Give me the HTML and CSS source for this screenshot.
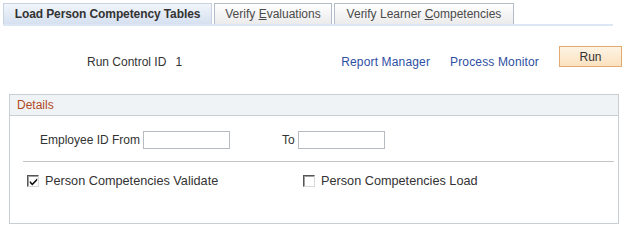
FILE: index.html
```html
<!DOCTYPE html>
<html lang="en">
<head>
    <meta charset="UTF-8">
    <title>Load Person Competency Tables</title>
    <link rel="stylesheet" href="styles.css">
</head>
<body>
    <!-- Page tabs -->
    <div class="tabs">
        <div class="tab active tab-load">Load Person Competency Tables</div>
        <div class="tab tab-eval">Verify <u>E</u>valuations</div>
        <div class="tab tab-learner">Verify Learner <u>C</u>ompetencies</div>
    </div>

    <!-- Run control row -->
    <div class="run-row">
        <span class="run-label">Run Control ID</span>
        <span class="run-value">1</span>
        <div class="run-links">
            <a href="#">Report Manager</a>
            <a href="#">Process Monitor</a>
            <button type="button" class="run-button">Run</button>
        </div>
    </div>

    <!-- Details group box -->
    <div class="group">
        <div class="group-header">Details</div>
        <div class="group-body">
            <div class="field-row">
                <label class="field-label" for="emp-from">Employee ID From</label>
                <input type="text" id="emp-from" class="field-input">
                <label class="field-label to-label" for="emp-to">To</label>
                <input type="text" id="emp-to" class="field-input">
            </div>
            <div class="separator"></div>
            <div class="check-row">
                <div class="check-item first">
                    <span class="check-box checked">
                        <svg width="9" height="9" viewBox="0 0 9 9"><path d="M0.8 3.8 L3.3 6.2 L8.2 1.2 L8.2 3.4 L3.3 8.4 L0.8 5.9 Z" fill="#111"/></svg>
                    </span>
                    <span>Person Competencies Validate</span>
                </div>
                <div class="check-item">
                    <span class="check-box"></span>
                    <span>Person Competencies Load</span>
                </div>
            </div>
        </div>
    </div>
</body>
</html>
```

FILE: styles.css
```css
/* Base */
body {
    margin: 0;
    font-family: "Liberation Sans", Arial, sans-serif;
    font-size: 12px;
    color: #333333;
    background: #ffffff;
}

/* Tabs */
.tabs {
    display: flex;
    gap: 2px;
    margin: 3px 0 0 3px;
    width: 610px;
    border-bottom: 2px solid #dce6f4;
}

.tab {
    height: 21px;
    line-height: 20px;
    border: 1px solid #b3bdca;
    border-bottom: none;
    background: linear-gradient(#ffffff, #ebebeb);
    color: #4a4a4a;
    text-align: center;
    box-sizing: border-box;
    white-space: nowrap;
}

.tab-load {
    width: 209px;
}

.tab-eval {
    width: 118px;
}

.tab-learner {
    width: 180px;
}

.tab.active {
    border-color: #c9d2de;
    background: linear-gradient(#f1f5fb, #d6e0ef);
    color: #333333;
    font-weight: bold;
    letter-spacing: -0.1px;
}

.tab u {
    text-decoration: underline;
}

/* Run control row */
.run-row {
    display: flex;
    align-items: flex-start;
    margin-top: 20px;
    padding: 0 5px 0 87px;
}

.run-label,
.run-value,
.run-links a {
    margin-top: 9px;
    line-height: 14px;
}

.run-value {
    margin-left: 9px;
}

.run-links {
    display: flex;
    align-items: flex-start;
    gap: 20px;
    margin-left: auto;
}

.run-links a {
    color: #2e4fa3;
    text-decoration: none;
    letter-spacing: 0.15px;
}

.run-button {
    width: 63px;
    height: 21px;
    padding: 0;
    border: 1px solid #e2a971;
    background: linear-gradient(#fdf3e4, #fbe2bf);
    font-family: inherit;
    font-size: 12px;
    color: #333333;
}

/* Details group box */
.group {
    margin: 25px 0 0 9px;
    width: 610px;
    border: 1px solid #c9ced3;
    box-sizing: border-box;
}

.group-header {
    height: 20px;
    line-height: 20px;
    padding-left: 7px;
    background: #f0f3f5;
    border-bottom: 1px solid #c9ced3;
    color: #b04a26;
}

.group-body {
    padding: 15px 0 35px 0;
}

.field-row {
    display: flex;
    align-items: center;
    padding-left: 30px;
}

.field-label {
    margin-right: 3px;
}

.to-label {
    margin-left: 52px;
}

.field-input {
    width: 87px;
    height: 18px;
    margin: 0;
    padding: 0 2px;
    border: 1px solid #b7bcc2;
    box-sizing: border-box;
    font-family: inherit;
    font-size: 12px;
}

.separator {
    height: 0;
    margin: 12px 4px 0 13px;
    border-top: 1px solid #c4c4c4;
}

.check-row {
    display: flex;
    align-items: center;
    margin-top: 12px;
    padding-left: 17px;
    font-size: 12.7px;
}

.check-item {
    display: flex;
    align-items: center;
    gap: 6px;
}

.check-item.first {
    width: 276px;
}

.check-box {
    display: flex;
    align-items: center;
    justify-content: center;
    width: 12px;
    height: 12px;
    border: 1px solid #555555;
    border-right-color: #d8d8d8;
    border-bottom-color: #d8d8d8;
    background: #ffffff;
    box-sizing: border-box;
    box-shadow: inset 1px 1px 0 #a0a0a0;
}
```
